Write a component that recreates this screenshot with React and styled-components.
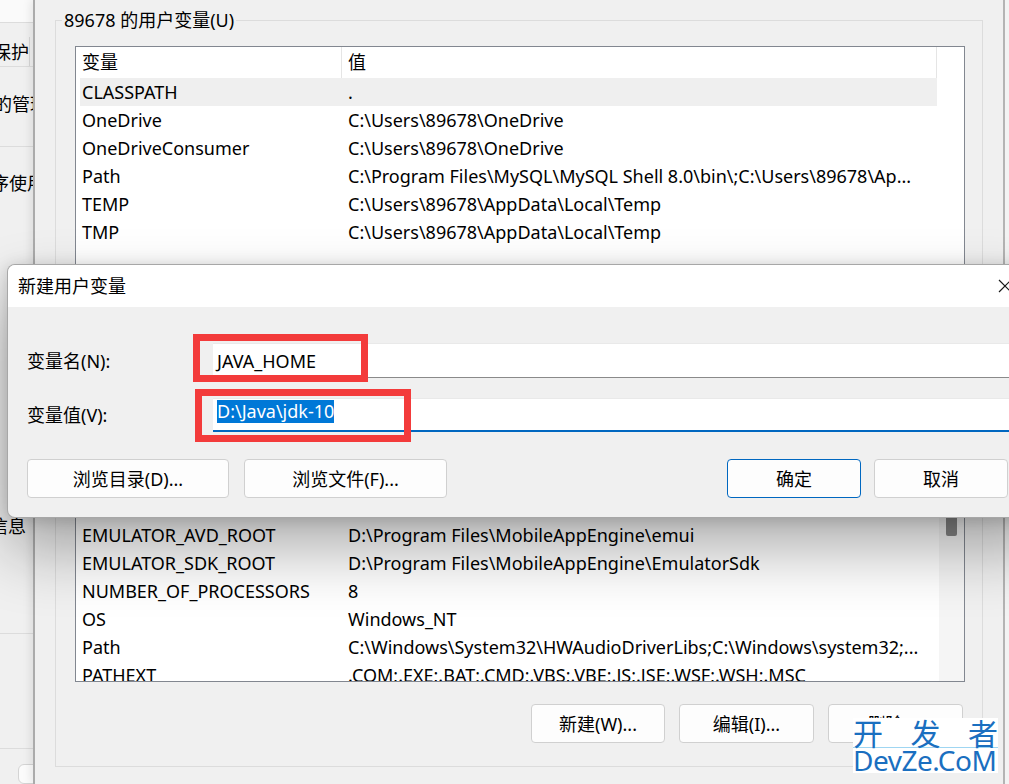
import React from 'react';
import styled, { createGlobalStyle } from 'styled-components';

const userVars = [
  ['CLASSPATH', '.'],
  ['OneDrive', 'C:\\Users\\89678\\OneDrive'],
  ['OneDriveConsumer', 'C:\\Users\\89678\\OneDrive'],
  ['Path', 'C:\\Program Files\\MySQL\\MySQL Shell 8.0\\bin\\;C:\\Users\\89678\\Ap...'],
  ['TEMP', 'C:\\Users\\89678\\AppData\\Local\\Temp'],
  ['TMP', 'C:\\Users\\89678\\AppData\\Local\\Temp'],
];

const systemVars = [
  ['ComSpec', 'C:\\Windows\\system32\\cmd.exe'],
  ['DriverData', 'C:\\Windows\\System32\\Drivers\\DriverData'],
  ['EMULATOR_APP_ROOT', 'D:\\Program Files\\MobileAppEngine'],
  ['EMULATOR_AVD_HOME', 'D:\\Program Files\\MobileAppEngine\\avd'],
  ['EMULATOR_AVD_ROOT', 'D:\\Program Files\\MobileAppEngine\\emui'],
  ['EMULATOR_SDK_ROOT', 'D:\\Program Files\\MobileAppEngine\\EmulatorSdk'],
  ['NUMBER_OF_PROCESSORS', '8'],
  ['OS', 'Windows_NT'],
  ['Path', 'C:\\Windows\\System32\\HWAudioDriverLibs;C:\\Windows\\system32;...'],
  ['PATHEXT', '.COM;.EXE;.BAT;.CMD;.VBS;.VBE;.JS;.JSE;.WSF;.WSH;.MSC'],
];

function VarList({ rows, height, top, selected, scroll }) {
  return (
    <List $h={height} $mt={top}>
      <ListBody>
        <HeaderRow>
          <HeaderCell $w={266}>变量</HeaderCell>
          <HeaderCell $w={595}>值</HeaderCell>
        </HeaderRow>
        {rows.map(([name, value], i) => (
          <Row key={name + i} $selected={i === selected}>
            <Cell $w={262} $pad={2}>{name}</Cell>
            <Cell $w={595} $pad={6}>{value}</Cell>
          </Row>
        ))}
      </ListBody>
      {scroll && (
        <ScrollTrack>
          <Thumb $top={scroll.top} $h={scroll.h} />
        </ScrollTrack>
      )}
    </List>
  );
}

function App() {
  return (
    <>
      <GlobalStyle />
      <Screen>
        <BackWindow>
          <StripBand $h={23} $bg="#fafafa" $line />
          <StripBand $h={44} $line>
            <StripTab>
              <StripText $shift={-7}>保护</StripText>
            </StripTab>
          </StripBand>
          <StripBand $h={80} $line>
            <StripText $shift={-6} $top={25}>的管理</StripText>
          </StripBand>
          <StripBand $h={487} $line>
            <StripText $shift={-9} $top={24}>序使用</StripText>
            <StripText $shift={-10} $top={319}>信息</StripText>
          </StripBand>
          <StripBand $h={115} $line />
          <StripBand $h={35}>
            <StripBox />
          </StripBand>
        </BackWindow>

        <EnvWindow>
          <Group $pb={10}>
            <Legend>89678 的用户变量(U)</Legend>
            <VarList rows={userVars} height={230} top={14} selected={0} />
            <ButtonRow $mt={10}>
              <Button $w={134}>新建(N)...</Button>
              <Button $w={135}>编辑(E)...</Button>
              <Button $w={135}>删除(D)</Button>
            </ButtonRow>
          </Group>
          <Group $pb={23} $mt={10}>
            <Legend>系统变量(S)</Legend>
            <VarList rows={systemVars} height={305} top={7} scroll={{ top: 92, h: 66 }} />
            <ButtonRow $mt={22}>
              <Button $w={134}>新建(W)...</Button>
              <Button $w={135}>编辑(I)...</Button>
              <Button $w={135}>删除(L)</Button>
            </ButtonRow>
          </Group>
        </EnvWindow>
        <RightEdge />

        <Dialog>
          <TitleBar>
            <Title>新建用户变量</Title>
            <CloseIcon width="14" height="14" viewBox="0 0 14 14">
              <path d="M1 1 L13 13 M13 1 L1 13" stroke="#1a1a1a" strokeWidth="1.2" fill="none" />
            </CloseIcon>
          </TitleBar>
          <DialogBody>
            <FieldRow $h={35} $mt={0}>
              <FieldLabel>变量名(N):</FieldLabel>
              <TextBox>
                <BoxText>JAVA_HOME</BoxText>
              </TextBox>
              <RedMark $l={166} $t={-9} $w={175} $h={48} />
            </FieldRow>
            <FieldRow $h={34} $mt={20}>
              <FieldLabel>变量值(V):</FieldLabel>
              <TextBox $focused>
                <Selection>D:\Java\jdk-10</Selection>
              </TextBox>
              <RedMark $l={168} $t={-9} $w={216} $h={53} />
            </FieldRow>
            <DialogButtons>
              <Button $w={202}>浏览目录(D)...</Button>
              <Button $w={203}>浏览文件(F)...</Button>
              <RightButtons>
                <Button $w={134} $primary>确定</Button>
                <Button $w={134}>取消</Button>
              </RightButtons>
            </DialogButtons>
          </DialogBody>
        </Dialog>

        <Watermark>
          <WmTop>
            <span>开</span>
            <span>发</span>
            <span>者</span>
          </WmTop>
          <WmBottom>DevZe.CoM</WmBottom>
        </Watermark>
      </Screen>
    </>
  );
}

//Styled Components
const GlobalStyle = createGlobalStyle`
  html, body {
    margin:0;
    padding:0;
    background:#f0f0f0;
  }
  body {
    width:1009px;
    height:784px;
    overflow:hidden;
  }
`;

const Screen = styled.div`
  position:relative;
  display:flex;
  width:1009px;
  height:784px;
  overflow:hidden;
  background:#f0f0f0;
  color:#000;
  font-family:"Noto Sans", "Noto Sans CJK SC", sans-serif;
  font-size:18px;
`;

const BackWindow = styled.div`
  flex:none;
  width:33px;
  display:flex;
  flex-direction:column;
  overflow:hidden;
  background:#f0f0f0;
`;

const StripBand = styled.div`
  flex:none;
  height:${p => p.$h}px;
  box-sizing:border-box;
  display:flex;
  flex-direction:column;
  background:${p => p.$bg || 'transparent'};
  border-bottom:${p => (p.$line ? '1px solid #dcdcdc' : 'none')};
`;

const StripTab = styled.div`
  margin-top:auto;
  width:30px;
  height:29px;
  box-sizing:border-box;
  border-right:1px solid #d6d6d6;
  display:flex;
  align-items:center;
`;

const StripText = styled.div`
  white-space:nowrap;
  line-height:24px;
  margin-left:${p => p.$shift}px;
  margin-top:${p => p.$top || 0}px;
`;

const StripBox = styled.div`
  margin:15px 0 0 18px;
  width:40px;
  height:40px;
  border:1px solid #d4d4d4;
  border-radius:6px;
  background:#fbfbfb;
`;

const EnvWindow = styled.div`
  flex:none;
  width:972px;
  box-sizing:border-box;
  padding:8px 20px 0;
  border-left:2px solid #ababab;
  border-right:2px solid #b4b4b4;
  background:#f0f0f0;
  box-shadow:-3px 0 8px rgba(0,0,0,0.08);
`;

const RightEdge = styled.div`
  flex:1;
  background:#f3f3f3;
`;

const Group = styled.fieldset`
  margin:${p => p.$mt || 0}px 0 0;
  padding:0 0 ${p => p.$pb}px;
  min-width:0;
  border:1px solid #dcdcdc;
`;

const Legend = styled.legend`
  margin-left:6px;
  padding:0 2px;
  line-height:24px;
  font-size:18px;
`;

const List = styled.div`
  margin:${p => p.$mt}px 0 0 19px;
  width:890px;
  height:${p => p.$h}px;
  box-sizing:border-box;
  border:1px solid #828790;
  background:#fff;
  display:flex;
  overflow:hidden;
`;

const ListBody = styled.div`
  flex:1;
  display:flex;
  flex-direction:column;
  overflow:hidden;
`;

const HeaderRow = styled.div`
  flex:none;
  display:flex;
  height:31px;
`;

const HeaderCell = styled.div`
  width:${p => p.$w}px;
  box-sizing:border-box;
  padding-left:6px;
  border-right:1px solid #e5e5e5;
  line-height:31px;
`;

const Row = styled.div`
  flex:none;
  display:flex;
  height:28px;
  width:857px;
  margin-left:4px;
  background:${p => (p.$selected ? '#efefef' : 'transparent')};
`;

const Cell = styled.div`
  flex:none;
  width:${p => p.$w}px;
  box-sizing:border-box;
  padding-left:${p => p.$pad}px;
  line-height:28px;
  white-space:nowrap;
  overflow:hidden;
`;

const ScrollTrack = styled.div`
  flex:none;
  width:25px;
  display:flex;
  flex-direction:column;
  background:#f5f5f5;
`;

const Thumb = styled.div`
  margin:${p => p.$top}px 0 0 7px;
  width:11px;
  height:${p => p.$h}px;
  border-radius:2px;
  background:#868686;
`;

const ButtonRow = styled.div`
  display:flex;
  justify-content:flex-end;
  gap:14px;
  margin:${p => p.$mt}px 0 0 19px;
  width:888px;
`;

const Button = styled.button`
  flex:none;
  width:${p => p.$w}px;
  height:39px;
  box-sizing:border-box;
  padding:0;
  border:1px solid ${p => (p.$primary ? '#0067c0' : '#d0d0d0')};
  border-radius:4px;
  background:#fdfdfd;
  color:#000;
  font-family:inherit;
  font-size:18px;
  line-height:24px;
  display:flex;
  align-items:center;
  justify-content:center;
`;

const Dialog = styled.div`
  position:absolute;
  left:7px;
  top:264px;
  z-index:2;
  width:1040px;
  box-sizing:border-box;
  border:1px solid rgba(0,0,0,0.3);
  border-radius:8px;
  overflow:hidden;
  background:#f0f0f0;
  box-shadow:0 32px 64px rgba(0,0,0,0.32), 0 2px 16px rgba(0,0,0,0.16);
`;

const TitleBar = styled.div`
  height:42px;
  display:flex;
  align-items:center;
  padding:0 34px 0 10px;
  background:#fff;
`;

const Title = styled.div`
  line-height:24px;
`;

const CloseIcon = styled.svg`
  margin-left:auto;
  flex:none;
`;

const DialogBody = styled.div`
  display:flex;
  flex-direction:column;
  padding:36px 38px 19px 19px;
`;

const FieldRow = styled.div`
  position:relative;
  display:flex;
  align-items:center;
  height:${p => p.$h}px;
  margin-top:${p => p.$mt}px;
`;

const FieldLabel = styled.div`
  flex:none;
  width:186px;
  line-height:24px;
`;

const TextBox = styled.div`
  flex:1;
  align-self:stretch;
  margin-right:-40px;
  box-sizing:border-box;
  padding-left:4px;
  background:#fff;
  border-top:1px solid #e9e9e9;
  border-bottom:${p => (p.$focused ? '2px solid #0067c0' : '1px solid #8a8a8a')};
  display:flex;
  align-items:${p => (p.$focused ? 'flex-start' : 'center')};
`;

const BoxText = styled.span`
  line-height:24px;
`;

const Selection = styled.span`
  margin-top:1px;
  background:#0078d7;
  color:#fff;
  line-height:23px;
`;

const RedMark = styled.div`
  position:absolute;
  left:${p => p.$l}px;
  top:${p => p.$t}px;
  width:${p => p.$w}px;
  height:${p => p.$h}px;
  box-sizing:border-box;
  border:7px solid #f33b3b;
  pointer-events:none;
`;

const DialogButtons = styled.div`
  display:flex;
  gap:15px;
  margin-top:27px;
`;

const RightButtons = styled.div`
  display:flex;
  gap:13px;
  margin-left:auto;
`;

const Watermark = styled.div`
  position:absolute;
  left:853px;
  top:718px;
  z-index:3;
  width:145px;
  height:55px;
  background:#fff;
  display:flex;
  flex-direction:column;
  color:#1a6fc0;
`;

const WmTop = styled.div`
  display:flex;
  justify-content:space-between;
  height:30px;
  box-sizing:border-box;
  border-bottom:1px solid #9fd6f2;
  font-family:"Noto Sans CJK SC", sans-serif;
  font-size:30px;
  line-height:28px;
`;

const WmBottom = styled.div`
  font-family:"Noto Sans", sans-serif;
  font-size:28px;
  line-height:25px;
  letter-spacing:-0.5px;
  white-space:nowrap;
`;

export default App;
